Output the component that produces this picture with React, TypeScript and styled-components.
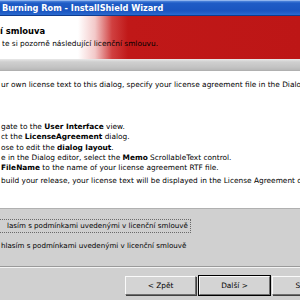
import React from "react";
import styled, { createGlobalStyle } from "styled-components";

const GlobalStyle = createGlobalStyle`
  html, body {
    margin: 0;
    padding: 0;
    background: #d0d0d0;
  }
`;

const Window = styled.div`
  width: 300px;
  height: 300px;
  overflow: hidden;
  display: flex;
  flex-direction: column;
  font-family: "DejaVu Sans", "Liberation Sans", sans-serif;
  font-size: 7.4px;
  color: #000;
  background: #d0d0d0;
`;

const TitleBar = styled.div`
  height: 16px;
  flex: none;
  box-sizing: border-box;
  display: flex;
  align-items: center;
  padding-left: 2px;
  background: linear-gradient(180deg, #4f86dc 0%, #1f5cc6 15%, #1a55c0 70%, #2a6ad0 100%);
  border-top: 1px solid #8fb4ee;
  border-bottom: 1px solid #0e3c8e;
  color: #fff;
  font-weight: bold;
  font-size: 8.2px;
  white-space: nowrap;
`;

const Header = styled.div`
  height: 43px;
  flex: none;
  box-sizing: border-box;
  padding-top: 10px;
  background: linear-gradient(90deg, #ffffff 0px, #ffffff 78px, #f3c9c9 95px, #d04040 112px, #c01818 128px, #bd1616 100%);
  white-space: nowrap;
`;

const HeaderTitle = styled.div`
  font-weight: bold;
  font-size: 8.4px;
  line-height: 11px;
`;

const HeaderSub = styled.div`
  padding-left: 2px;
  margin-top: 2px;
  line-height: 10px;
`;

const Band = styled.div`
  height: 12px;
  flex: none;
  box-sizing: border-box;
  background: linear-gradient(180deg, #e8e8e8 0px, #cfcfcf 3px, #c4c4c4 8px, #b8b8b8 11px, #a8a8a8 12px);
`;

const LicenseBox = styled.div`
  height: 137px;
  flex: none;
  box-sizing: border-box;
  background: #fff;
  padding: 9px 0 0 1px;
  line-height: 10.2px;
  white-space: nowrap;
`;

const Para = styled.div<{ $gap?: number }>`
  margin-top: ${(p) => p.$gap ?? 0}px;
`;

const Footer = styled.div`
  flex: 1;
  display: flex;
  flex-direction: column;
  background: #d0d0d0;
  border-top: 1px solid #b0b0b0;
`;

const Options = styled.div`
  display: flex;
  flex-direction: column;
  gap: 6px;
  padding-top: 10px;
  white-space: nowrap;
  font-size: 7.1px;
`;

const Option = styled.div<{ $focused?: boolean; $indent: number }>`
  align-self: flex-start;
  padding: 1px 2px 1px ${(p) => p.$indent}px;
  line-height: 10px;
  border: 1px dotted ${(p) => (p.$focused ? "#6a6a6a" : "transparent")};
  border-left: none;
`;

const Separator = styled.div`
  margin-top: 13px;
  height: 1px;
  background: #9a9a9a;
  border-bottom: 1px solid #f4f4f4;
`;

const ButtonRow = styled.div`
  display: flex;
  gap: 2px;
  padding: 8px 0 0 125px;
`;

const Button = styled.div<{ $default?: boolean }>`
  flex: none;
  width: 71px;
  height: 19px;
  box-sizing: border-box;
  display: flex;
  align-items: center;
  justify-content: center;
  background: #d4d4d4;
  border-top: 1px solid #fafafa;
  border-left: 1px solid #fafafa;
  border-right: 1px solid #6e6e6e;
  border-bottom: 1px solid #6e6e6e;
  box-shadow: ${(p) => (p.$default ? "0 0 0 1px #000" : "1px 1px 0 #404040")};
  margin-left: ${(p) => (p.$default ? "1px" : "0")};
`;

export default function App() {
  return (
    <>
      <GlobalStyle />
      <Window>
        <TitleBar>Burning Rom - InstallShield Wizard</TitleBar>
        <Header>
          <HeaderTitle>í smlouva</HeaderTitle>
          <HeaderSub>te si pozorně následující licenční smlouvu.</HeaderSub>
        </Header>
        <Band />
        <LicenseBox>
          <Para>ur own license text to this dialog, specify your license agreement file in the Dialog editor.</Para>
          <Para $gap={32}>gate to the <b>User Interface</b> view.</Para>
          <Para>ct the <b>LicenseAgreement</b> dialog.</Para>
          <Para>ose to edit the <b>dialog layout</b>.</Para>
          <Para>e in the Dialog editor, select the <b>Memo</b> ScrollableText control.</Para>
          <Para><b>FileName</b> to the name of your license agreement RTF file.</Para>
          <Para $gap={3}>build your release, your license text will be displayed in the License Agreement dialog.</Para>
        </LicenseBox>
        <Footer>
          <Options>
            <Option $focused $indent={7}>lasím s podmínkami uvedenými v licenční smlouvě</Option>
            <Option $indent={1}>hlasím s podmínkami uvedenými v licenční smlouvě</Option>
          </Options>
          <Separator />
          <ButtonRow>
            <Button>&lt; Zpět</Button>
            <Button $default>Další &gt;</Button>
            <Button>Storno</Button>
          </ButtonRow>
        </Footer>
      </Window>
    </>
  );
}
